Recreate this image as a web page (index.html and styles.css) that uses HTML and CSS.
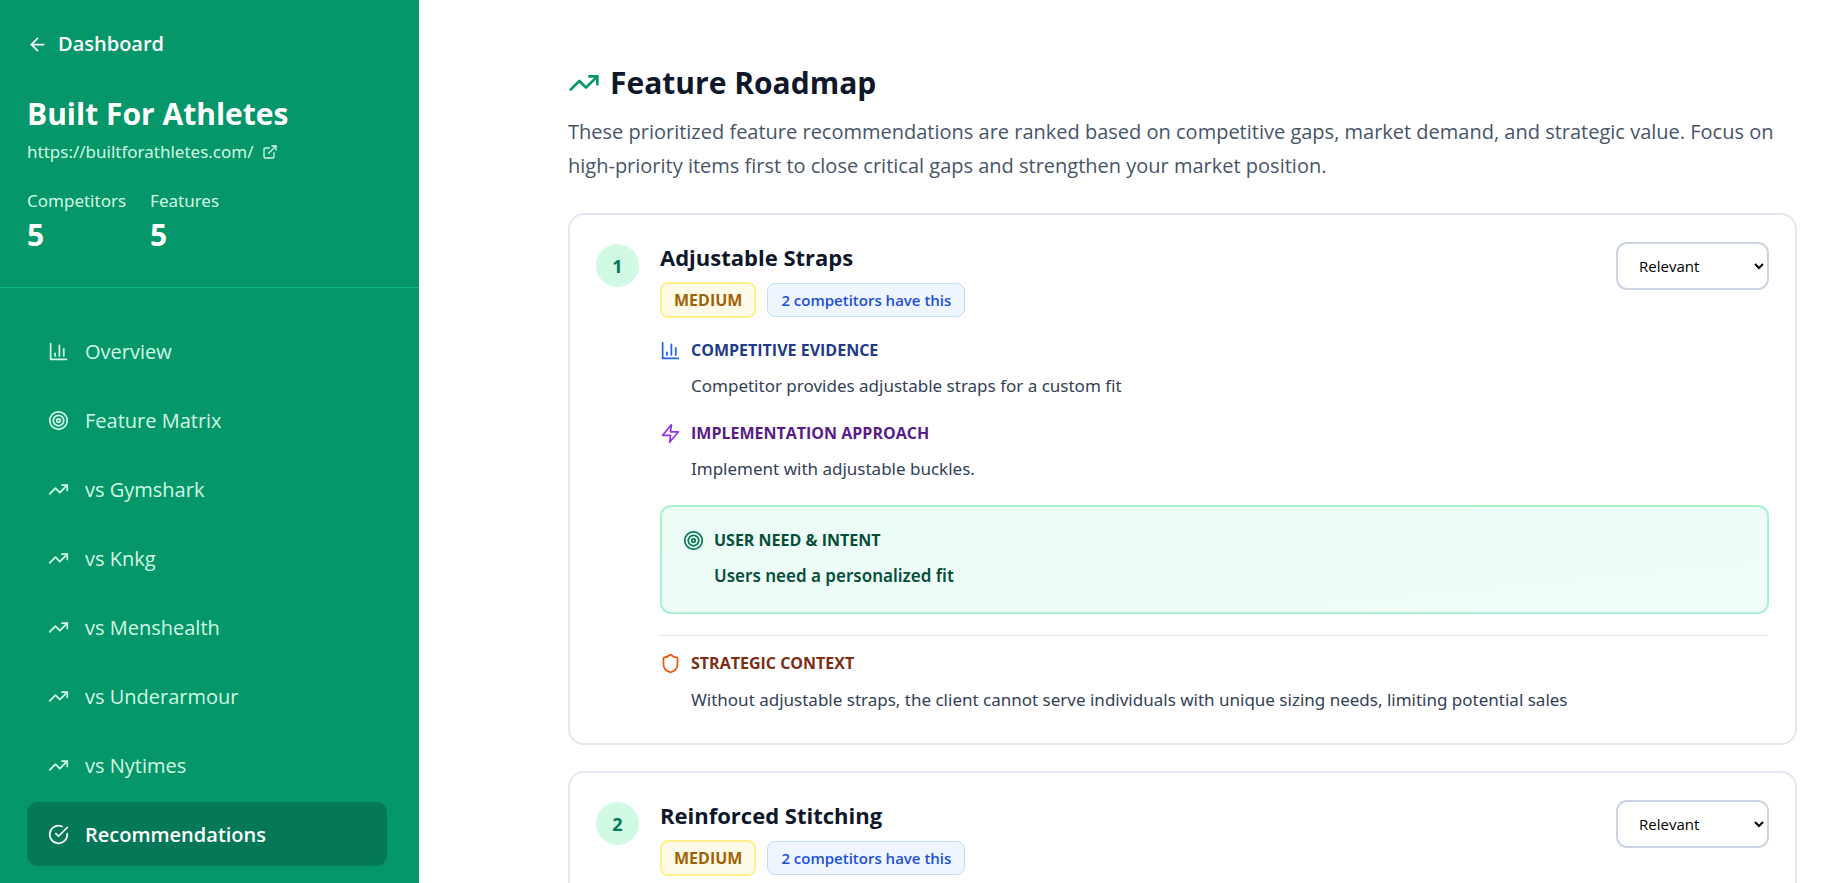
FILE: index.html
```html
<!DOCTYPE html>
<html lang="en">
<head>
    <meta charset="UTF-8">
    <meta name="viewport" content="width=device-width, initial-scale=1.0">
    <title>Feature Roadmap</title>
    <link rel="stylesheet" href="styles.css">
</head>
<body>

    <!-- shared icons -->
    <svg class="icon-defs" aria-hidden="true">
        <symbol id="icon-arrow-left" viewBox="0 0 24 24"><path d="m12 19-7-7 7-7"/><path d="M19 12H5"/></symbol>
        <symbol id="icon-external" viewBox="0 0 24 24"><path d="M15 3h6v6"/><path d="M10 14 21 3"/><path d="M18 13v6a2 2 0 0 1-2 2H5a2 2 0 0 1-2-2V8a2 2 0 0 1 2-2h6"/></symbol>
        <symbol id="icon-chart" viewBox="0 0 24 24"><path d="M3 3v18h18"/><path d="M18 17V9"/><path d="M13 17V5"/><path d="M8 17v-3"/></symbol>
        <symbol id="icon-target" viewBox="0 0 24 24"><circle cx="12" cy="12" r="10"/><circle cx="12" cy="12" r="6"/><circle cx="12" cy="12" r="2"/></symbol>
        <symbol id="icon-trend" viewBox="0 0 24 24"><path d="m22 7-8.500 8.500-5-5L2 17"/><path d="M16 7h6v6"/></symbol>
        <symbol id="icon-check" viewBox="0 0 24 24"><path d="M22 11.080V12a10 10 0 1 1-5.930-9.140"/><path d="m9 11 3 3L22 4"/></symbol>
        <symbol id="icon-zap" viewBox="0 0 24 24"><path d="M13 2 3 14h9l-1 8 10-12h-9l1-8z"/></symbol>
        <symbol id="icon-shield" viewBox="0 0 24 24"><path d="M20 13c0 5-3.500 7.500-7.660 8.950a1 1 0 0 1-.670-.010C7.500 20.500 4 18 4 13V6a1 1 0 0 1 1-1c2 0 4.500-1.200 6.240-2.720a1.170 1.170 0 0 1 1.520 0C14.510 3.810 17 5 19 5a1 1 0 0 1 1 1z"/></symbol>
    </svg>

    <div class="layout">
        <aside class="sidebar">
            <div class="sidebar-header">
                <a class="back-link" href="#"><svg class="icon"><use href="#icon-arrow-left"/></svg>Dashboard</a>
                <h2 class="client-name">Built For Athletes</h2>
                <a class="client-url" href="https://builtforathletes.com/">https://builtforathletes.com/ <svg class="icon icon-small"><use href="#icon-external"/></svg></a>
                <dl class="stats">
                    <div>
                        <dt>Competitors</dt>
                        <dd>5</dd>
                    </div>
                    <div>
                        <dt>Features</dt>
                        <dd>5</dd>
                    </div>
                </dl>
            </div>
            <nav class="nav">
                <a class="nav-item" href="#"><svg class="icon"><use href="#icon-chart"/></svg>Overview</a>
                <a class="nav-item" href="#"><svg class="icon"><use href="#icon-target"/></svg>Feature Matrix</a>
                <a class="nav-item" href="#"><svg class="icon"><use href="#icon-trend"/></svg>vs Gymshark</a>
                <a class="nav-item" href="#"><svg class="icon"><use href="#icon-trend"/></svg>vs Knkg</a>
                <a class="nav-item" href="#"><svg class="icon"><use href="#icon-trend"/></svg>vs Menshealth</a>
                <a class="nav-item" href="#"><svg class="icon"><use href="#icon-trend"/></svg>vs Underarmour</a>
                <a class="nav-item" href="#"><svg class="icon"><use href="#icon-trend"/></svg>vs Nytimes</a>
                <a class="nav-item active" href="#"><svg class="icon"><use href="#icon-check"/></svg>Recommendations</a>
            </nav>
        </aside>

        <main class="content">
            <h1 class="page-title"><svg class="icon icon-large"><use href="#icon-trend"/></svg>Feature Roadmap</h1>
            <p class="intro">These prioritized feature recommendations are ranked based on competitive gaps, market demand, and strategic value. Focus on high-priority items first to close critical gaps and strengthen your market position.</p>

            <article class="card">
                <span class="rank">1</span>
                <div class="card-body">
                    <div class="card-top">
                        <div>
                            <h3 class="card-title">Adjustable Straps</h3>
                            <div class="badges">
                                <span class="badge badge-medium">MEDIUM</span>
                                <span class="badge badge-count">2 competitors have this</span>
                            </div>
                        </div>
                        <select class="status" aria-label="Status of Adjustable Straps">
                            <option>Relevant</option>
                            <option>Not Relevant</option>
                        </select>
                    </div>

                    <section class="detail evidence">
                        <h4><svg class="icon"><use href="#icon-chart"/></svg>COMPETITIVE EVIDENCE</h4>
                        <p>Competitor provides adjustable straps for a custom fit</p>
                    </section>
                    <section class="detail approach">
                        <h4><svg class="icon"><use href="#icon-zap"/></svg>IMPLEMENTATION APPROACH</h4>
                        <p>Implement with adjustable buckles.</p>
                    </section>
                    <section class="detail need">
                        <h4><svg class="icon"><use href="#icon-target"/></svg>USER NEED &amp; INTENT</h4>
                        <p>Users need a personalized fit</p>
                    </section>
                    <section class="detail strategy">
                        <h4><svg class="icon"><use href="#icon-shield"/></svg>STRATEGIC CONTEXT</h4>
                        <p>Without adjustable straps, the client cannot serve individuals with unique sizing needs, limiting potential sales</p>
                    </section>
                </div>
            </article>

            <article class="card">
                <span class="rank">2</span>
                <div class="card-body">
                    <div class="card-top">
                        <div>
                            <h3 class="card-title">Reinforced Stitching</h3>
                            <div class="badges">
                                <span class="badge badge-medium">MEDIUM</span>
                                <span class="badge badge-count">2 competitors have this</span>
                            </div>
                        </div>
                        <select class="status" aria-label="Status of Reinforced Stitching">
                            <option>Relevant</option>
                            <option>Not Relevant</option>
                        </select>
                    </div>
                </div>
            </article>
        </main>
    </div>

</body>
</html>
```
FILE: styles.css
```css
* {
    box-sizing: border-box;
    margin: 0;
    padding: 0;
}

html {
    scrollbar-width: none;
}

body {
    font-family: "Segoe UI", "Open Sans", "Noto Sans", sans-serif;
    font-size: 18px;
    color: #0f172a;
    background-color: #ffffff;
}

a {
    color: inherit;
    text-decoration: none;
}

.icon-defs {
    display: none;
}

.icon {
    width: 21px;
    height: 21px;
    flex-shrink: 0;
    fill: none;
    stroke: currentColor;
    stroke-width: 2;
    stroke-linecap: round;
    stroke-linejoin: round;
}

.icon-small {
    width: 16px;
    height: 16px;
}

.icon-large {
    width: 32px;
    height: 32px;
    color: #059669;
}

.layout {
    display: flex;
    align-items: flex-start;
}

/* sidebar */
.sidebar {
    position: sticky;
    top: 0;
    width: 419px;
    height: 100vh;
    flex-shrink: 0;
    overflow: hidden;
    background-color: #059669;
    color: #d1fae5;
}

.sidebar-header {
    padding: 28px 27px 31px;
    border-bottom: 1px solid #10b981;
}

.back-link {
    display: flex;
    align-items: center;
    gap: 10px;
    font-size: 20px;
    line-height: 32px;
    font-weight: 600;
    color: #ffffff;
}

.client-name {
    margin-top: 32px;
    font-size: 30px;
    line-height: 43px;
    font-weight: 700;
    color: #ffffff;
}

.client-url {
    display: flex;
    align-items: center;
    gap: 8px;
    font-family: "Segoe UI", "Noto Sans", sans-serif;
    font-size: 17px;
    line-height: 34px;
}

.stats {
    display: flex;
    gap: 24px;
    margin-top: 18px;
}

.stats dt {
    font-family: "Segoe UI", "Noto Sans", sans-serif;
    font-size: 17px;
    line-height: 27px;
}

.stats dd {
    font-size: 30px;
    line-height: 42px;
    font-weight: 700;
    color: #ffffff;
}

.nav {
    display: flex;
    flex-direction: column;
    gap: 5px;
    padding: 31px 32px 27px 27px;
}

.nav-item {
    display: flex;
    align-items: center;
    gap: 16px;
    height: 64px;
    padding: 0 21px;
    border-radius: 11px;
    font-size: 20px;
}

.nav-item.active {
    background-color: #047857;
    color: #ffffff;
    font-weight: 600;
}

/* main column */
.content {
    flex: 1;
    min-width: 0;
    padding: 64px 37px 64px 149px;
}

.page-title {
    display: flex;
    align-items: center;
    gap: 10px;
    font-size: 30px;
    line-height: 38px;
    font-weight: 700;
}

.intro {
    margin: 13px 0 30px;
    font-size: 20px;
    line-height: 34px;
    color: #475569;
}

.card {
    display: flex;
    gap: 21px;
    margin-bottom: 26px;
    padding: 27px 26px;
    border: 2px solid #e2e8f0;
    border-radius: 16px;
}

.rank {
    display: flex;
    align-items: center;
    justify-content: center;
    flex-shrink: 0;
    width: 43px;
    height: 43px;
    margin-top: 2px;
    border-radius: 50%;
    background-color: #d1fae5;
    color: #047857;
    font-weight: 700;
}

.card-body {
    flex: 1;
    min-width: 0;
}

.card-top {
    display: flex;
    justify-content: space-between;
    align-items: flex-start;
    margin-bottom: 16px;
}

.card-title {
    font-size: 22px;
    line-height: 30px;
    font-weight: 700;
}

.badges {
    display: flex;
    align-items: center;
    gap: 11px;
    margin-top: 10px;
}

.badge {
    padding: 4px 13px;
    border: 1px solid;
    border-radius: 8px;
    font-size: 15px;
    line-height: 24px;
    font-weight: 600;
}

.badge-medium {
    padding: 4px 12px;
    border-width: 2px;
    border-color: #fef08a;
    background-color: #fefce8;
    color: #a16207;
    font-size: 16px;
    font-weight: 700;
}

.badge-count {
    border-color: #bfdbfe;
    background-color: #eff6ff;
    color: #1d4ed8;
}

.status {
    width: 153px;
    height: 48px;
    padding: 0 17px;
    border: 2px solid #cbd5e1;
    border-radius: 11px;
    background-color: #ffffff;
    color: #000000;
    font-family: inherit;
    font-size: 15px;
}

.detail {
    margin-bottom: 16px;
}

.detail h4 {
    display: flex;
    align-items: center;
    gap: 10px;
    font-size: 16px;
    line-height: 32px;
    font-weight: 700;
}

.detail p {
    margin-top: 5px;
    padding-left: 31px;
    font-family: "Segoe UI", "Noto Sans", sans-serif;
    font-size: 17px;
    line-height: 30px;
    color: #334155;
}

.evidence h4 {
    color: #1e3a8a;
}

.evidence .icon {
    color: #2563eb;
}

.approach h4 {
    color: #581c87;
}

.approach .icon {
    color: #9333ea;
}

.need {
    margin: 21px 0;
    padding: 17px 21px 21px;
    border: 2px solid #a7f3d0;
    border-radius: 11px;
    background-image: linear-gradient(to bottom right, #ecfdf5, #f0fdfa);
}

.need h4,
.need p {
    color: #064e3b;
}

.need p {
    font-weight: 600;
}

.need .icon {
    color: #047857;
}

.strategy {
    margin-bottom: 0;
    padding-top: 11px;
    border-top: 1px solid #e2e8f0;
}

.strategy h4 {
    color: #7c2d12;
}

.strategy p {
    line-height: 32px;
}

.strategy .icon {
    color: #ea580c;
}
```
